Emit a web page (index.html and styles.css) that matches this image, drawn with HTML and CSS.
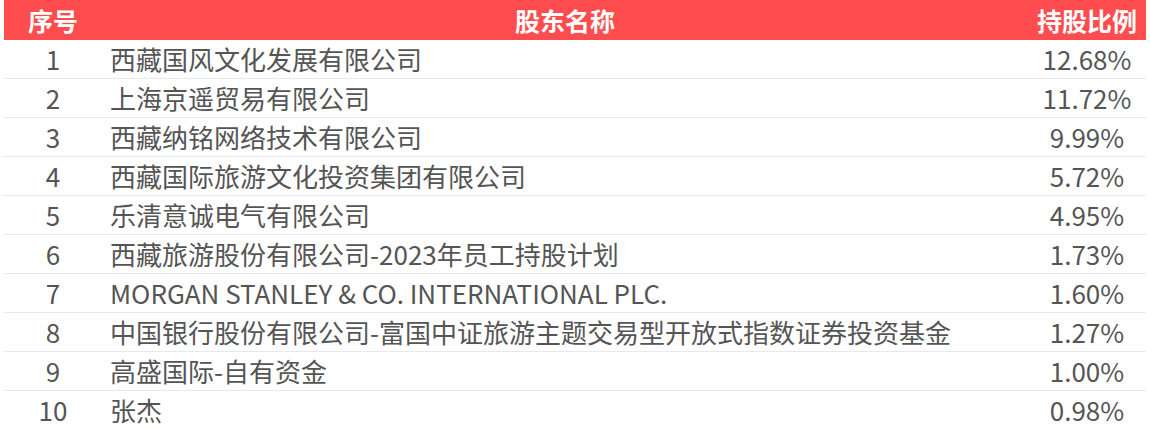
FILE: index.html
```html
<!DOCTYPE html>
<html lang="zh-CN">
<head>
<meta charset="utf-8">
<link rel="stylesheet" href="styles.css">
</head>
<body>
<table class="holders">
  <colgroup>
    <col class="c-no">
    <col class="c-name">
    <col class="c-pct">
  </colgroup>
  <thead>
    <tr><th>序号</th><th>股东名称</th><th>持股比例</th></tr>
  </thead>
  <tbody>
    <tr><td class="no">1</td><td class="name">西藏国风文化发展有限公司</td><td class="pct">12.68%</td></tr>
    <tr><td class="no">2</td><td class="name">上海京遥贸易有限公司</td><td class="pct">11.72%</td></tr>
    <tr><td class="no">3</td><td class="name">西藏纳铭网络技术有限公司</td><td class="pct">9.99%</td></tr>
    <tr><td class="no">4</td><td class="name">西藏国际旅游文化投资集团有限公司</td><td class="pct">5.72%</td></tr>
    <tr><td class="no">5</td><td class="name">乐清意诚电气有限公司</td><td class="pct">4.95%</td></tr>
    <tr><td class="no">6</td><td class="name">西藏旅游股份有限公司-2023年员工持股计划</td><td class="pct">1.73%</td></tr>
    <tr><td class="no">7</td><td class="name">MORGAN STANLEY &amp; CO. INTERNATIONAL PLC.</td><td class="pct">1.60%</td></tr>
    <tr><td class="no">8</td><td class="name">中国银行股份有限公司-富国中证旅游主题交易型开放式指数证券投资基金</td><td class="pct">1.27%</td></tr>
    <tr><td class="no">9</td><td class="name">高盛国际-自有资金</td><td class="pct">1.00%</td></tr>
    <tr><td class="no">10</td><td class="name">张杰</td><td class="pct">0.98%</td></tr>
  </tbody>
</table>
</body>
</html>
```
FILE: styles.css
```css
html, body {
  margin: 0;
  padding: 0;
  background: #fff;
}
body {
  padding: 0 4px;
  font-family: "Noto Sans CJK SC", "Noto Sans", sans-serif;
}
.holders {
  width: 1142px;
  border-collapse: collapse;
  table-layout: fixed;
}
.c-no { width: 98px; }
.c-pct { width: 118px; }
.holders th {
  background: #ff4d4f;
  color: #fff;
  font-weight: bold;
  font-size: 25px;
  height: 40px;
  padding: 0;
  text-align: center;
  line-height: 40px;
}
.holders td {
  height: 38px;
  padding: 0;
  font-size: 26px;
  line-height: 38px;
  color: #555;
  border-bottom: 1px solid #e8e8ef;
  white-space: nowrap;
}
.holders tbody tr:last-child td { border-bottom: none; }
.no { text-align: center; }
.name { text-align: left; padding-left: 8px !important; }
.pct { text-align: center; }
```
